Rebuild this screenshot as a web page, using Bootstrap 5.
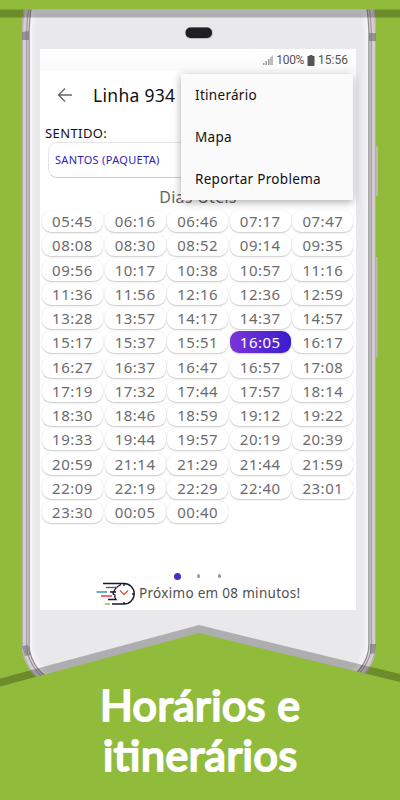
<!DOCTYPE html>
<html lang="pt-BR">
<head>
<meta charset="utf-8">
<meta name="viewport" content="width=device-width, initial-scale=1">
<title>Horários e itinerários</title>
<link href="https://cdn.jsdelivr.net/npm/bootstrap@5.3.0/dist/css/bootstrap.min.css" rel="stylesheet">
<style>
body{margin:0;background:#91bb3b;font-family:"Noto Sans","Open Sans",sans-serif;color:#111}
.stage{width:400px;height:800px;background:#91bb3b}
.backdrop{left:0;top:0;width:400px;height:800px}
.screen{width:316px;height:561px;margin:49px 0 0 40px;background:#fff}
.status{height:22px;padding:0 8px 0 0;font:12px/22px Roboto,sans-serif;color:#555;background:linear-gradient(#fff,#f9f9f9)}
.level{margin:0 3px;letter-spacing:-.3px}
.cell-icon{margin-right:3px}
.appbar{height:47px;padding-left:17px}
.route{font-size:17.5px;line-height:24px;margin-left:20px;letter-spacing:.3px;color:#111}
.direction{font-size:13px;line-height:18px;padding-left:5px;margin-top:6px;letter-spacing:.4px}
.picker{height:36px;margin:0 8px;border-radius:9px;border:1px solid #e5e5e5;border-bottom-color:#ccc;padding-left:6px;font-size:11px;line-height:34px;color:#3418bd;letter-spacing:.33px}
.daytype{font-size:16px;line-height:22px;margin-top:8px;height:24px;color:#626262;letter-spacing:.25px}
.times{display:grid;grid-template-columns:repeat(5,61px);gap:2.25px 1.6px;padding-left:2px}
.slot{height:22px;border-radius:9px;background:#fff;box-shadow:0 1px 1.5px rgba(0,0,0,.2),0 0 1px rgba(0,0,0,.1);font-size:15px;line-height:23px;color:#6c6c6c;text-align:center;letter-spacing:.5px}
.slot.now{color:#fff;background:linear-gradient(90deg,#7a36d8,#3b1cce)}
.pager{height:8px;margin-top:49px;padding-left:133.500px;gap:17.5px}
.pip{width:3.5px;height:3.5px;border-radius:50%;background:#999}
.pip.on{width:7px;height:7px;background:#4b2cc5;margin-right:-1.5px}
.next{height:27px;padding-left:56px;font-size:13.5px;letter-spacing:.3px;color:#505050}
.next-text{margin-left:3px;white-space:nowrap}
.options{left:181px;top:74px;width:172px;height:126px;background:#fafafa;box-shadow:0 2px 8px rgba(0,0,0,.35);border-radius:1px;font-size:13.5px;letter-spacing:.3px;color:#111}
.options div{height:42px;line-height:43px;padding-left:14px}
.headline text{font-family:Lato,sans-serif;font-weight:400;font-size:43px;fill:#fff;stroke:#fff;stroke-width:2.2px;stroke-linejoin:round;stroke-linecap:round}
</style>
</head>
<body>
<main class="stage position-relative overflow-hidden">
<svg class="backdrop position-absolute" viewBox="0 0 400 800">
<defs>
<path id="shell" d="M25 0Q22 20 22 34V645Q22 660 33 674Q46 690 70 690H330Q352 690 365 674Q376 660 376 645V34Q376 20 373 0Z"/>
<clipPath id="shell-clip"><use href="#shell"/></clipPath>
</defs>
<path d="M375 146h1.500q1.500 0 1.500 2v46q0 2-1.500 2H375zM375 257h2.500v97q0 4-2.500 4z" fill="#bcb8ba"/>
<g clip-path="url(#shell-clip)" fill="none">
<use href="#shell" fill="#e9e9eb"/>
<use href="#shell" stroke="#eeeef1" stroke-width="26"/>
<use href="#shell" stroke="#f4f4f7" stroke-width="20"/>
<use href="#shell" stroke="#958e92" stroke-width="15.500"/>
<use href="#shell" stroke="#d8d1d4" stroke-width="13"/>
<use href="#shell" stroke="#958e92" stroke-width="10.500"/>
<use href="#shell" stroke="#d4cdd0" stroke-width="8.500"/>
<use href="#shell" stroke="#b3adaf" stroke-width="2"/>
<path d="M22 32l7-1v9h-7zM369 33h7v8h-7zM22 646l6-1 3 10-6 1zM370 644h6v9l-6 1z" fill="#777278" opacity=".65"/>
</g>
<rect x="185" y="27" width="28" height="12" rx="6" fill="#bbbcc0"/>
<rect x="185.500" y="27.500" width="26.500" height="10.500" rx="5" fill="#1e1e24"/>
<path d="M0 0H400V9.500H0z" fill="#91bb3b"/><path d="M0 9.500H400V17.500H0z" fill="#000" opacity=".25"/>
<path d="M0 678.500L199 625L400 674V690H0z" fill="#000" opacity=".25"/>
<path d="M0 686.500L199 633L400 682V800H0z" fill="#91bb3b"/>
<g class="headline"><text x="100" y="720.500" textLength="200">Horários e</text><text x="103" y="770.500" textLength="194">itinerários</text></g>
</svg>

<div class="d-flex position-relative">
<section class="screen d-flex flex-column flex-shrink-0">
<div class="status d-flex justify-content-end align-items-center">
<svg width="10" height="11" viewBox="0 0 10 11"><path d="M0 10h1.500V8H0zM2.500 10H4V6H2.500zM5 10h1.500V4H5z" fill="#999"/><path d="M7 10h3V0L7 3z" fill="#bbb"/></svg>
<span class="level">100%</span>
<svg class="cell-icon" width="8" height="11" viewBox="0 0 8 11"><path d="M2.500 0h3v1H7.500v10h-7V1h2z" fill="#555"/></svg>
<span>15:56</span>
</div>
<div class="appbar d-flex align-items-center">
<svg width="16" height="16" viewBox="0 0 16 16" fill="none" stroke="#666" stroke-width="1.400"><path d="M8 1.500L1.500 8L8 14.500M1.500 8H15"/></svg>
<span class="route">Linha 934</span>
</div>
<div class="direction">SENTIDO:</div>
<div class="picker">SANTOS (PAQUETA)</div>
<div class="daytype text-center">Dias Úteis</div>
<div class="times" id="times"></div>
<div class="pager d-flex align-items-center"><span class="pip on"></span><span class="pip"></span><span class="pip"></span></div>
<div class="next d-flex align-items-center">
<svg class="flex-shrink-0" width="40" height="24" viewBox="0 0 40 24" fill="none" stroke="#17172b" stroke-width="1.300"><path d="M7 1.500H28A10 10 0 0 1 28 22H16M28 2v2M28 20v2M38 12h-2M14 10H20M12 17.500H20Q18 15 19 13L17 12Q18 6 25 2.500"/><path d="M10 5.500H21" stroke="#55556a"/><path d="M0.500 10H11" stroke="#1687a5"/><path d="M5 14H16" stroke="#ef1c25"/><path d="M9 22H14" stroke="#8db428"/><path d="M24 8.500L28 12.500L32 8.500" stroke="#e85230"/></svg>
<span class="next-text">Próximo em 08 minutos!</span>
</div>
</section>
</div>

<div class="options position-absolute"><div>Itinerário</div><div>Mapa</div><div>Reportar Problema</div></div>
</main>
<script>
const schedule = `05:45 06:16 06:46 07:17 07:47 08:08 08:30 08:52 09:14 09:35 09:56 10:17 10:38 10:57 11:16
11:36 11:56 12:16 12:36 12:59 13:28 13:57 14:17 14:37 14:57 15:17 15:37 15:51 16:05 16:17
16:27 16:37 16:47 16:57 17:08 17:19 17:32 17:44 17:57 18:14 18:30 18:46 18:59 19:12 19:22
19:33 19:44 19:57 20:19 20:39 20:59 21:14 21:29 21:44 21:59 22:09 22:19 22:29 22:40 23:01 23:30 00:05 00:40`.split(/\s+/);
document.getElementById('times').innerHTML = schedule.map(t => `<div class="slot${t === '16:05' ? ' now' : ''}">${t}</div>`).join('');
</script>
<script src="https://cdn.jsdelivr.net/npm/bootstrap@5.3.0/dist/js/bootstrap.bundle.min.js"></script>
</body>
</html>
